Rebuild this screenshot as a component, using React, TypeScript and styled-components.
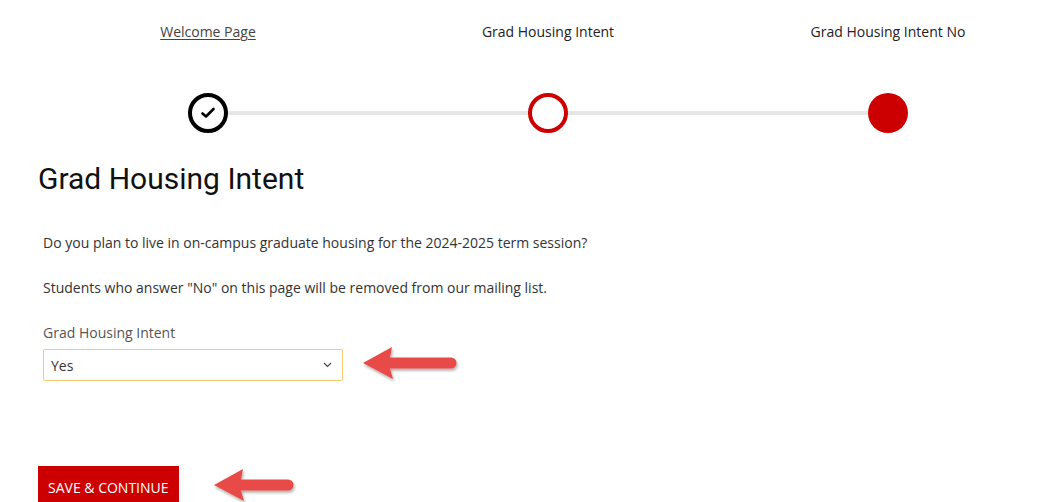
import React from "react";
import styled, { createGlobalStyle } from "styled-components";

const GlobalStyle = createGlobalStyle`
  html, body {
    margin: 0;
    padding: 0;
    background: #fff;
    overflow: hidden;
  }
  body {
    font-family: "Open Sans", "Liberation Sans", sans-serif;
    color: #333;
  }
`;

const Page = styled.div`
  width: 1038px;
  height: 502px;
  overflow: hidden;
`;

const Stepper = styled.div`
  position: relative;
  display: grid;
  grid-template-columns: repeat(3, 340px);
  margin-left: 38px;
  padding-top: 22px;
`;

const Track = styled.div`
  position: absolute;
  left: 170px;
  right: 170px;
  top: 111px;
  height: 4px;
  background: #e6e6e6;
`;

const Step = styled.div`
  display: flex;
  flex-direction: column;
  align-items: center;
  z-index: 1;
`;

const StepLabel = styled.span<{ $link?: boolean }>`
  font-size: 14px;
  line-height: 19px;
  color: ${(p) => (p.$link ? "#444" : "#222")};
  text-decoration: ${(p) => (p.$link ? "underline" : "none")};
  text-underline-offset: 2px;
`;

const Dot = styled.div<{ $kind: "done" | "current" | "next" }>`
  box-sizing: border-box;
  margin-top: 52px;
  width: 40px;
  height: 40px;
  border-radius: 50%;
  display: flex;
  align-items: center;
  justify-content: center;
  background: ${(p) => (p.$kind === "next" ? "#cc0000" : "#fff")};
  border: ${(p) =>
    p.$kind === "done"
      ? "4px solid #000"
      : p.$kind === "current"
      ? "4px solid #cc0000"
      : "none"};
`;

const Content = styled.div`
  padding-left: 38px;
`;

const Title = styled.h1`
  margin: 28px 0 0;
  font-family: Roboto, "Liberation Sans", sans-serif;
  font-weight: 400;
  font-size: 30px;
  line-height: 36px;
  color: #111;
`;

const Body = styled.div`
  padding-left: 5px;
  margin-top: 36px;
`;

const Para = styled.p`
  margin: 0 0 26px;
  font-size: 14px;
  line-height: 19px;
  color: #333;
`;

const FieldLabel = styled.label`
  display: block;
  margin-top: 15px;
  font-size: 14px;
  line-height: 19px;
  color: #555;
`;

const FieldRow = styled.div`
  display: flex;
  align-items: center;
  gap: 18px;
  margin-top: 4px;
`;

const SelectBox = styled.div`
  box-sizing: border-box;
  width: 300px;
  height: 32px;
  border: 1px solid #f6ca72;
  border-radius: 2px;
  display: flex;
  align-items: center;
  justify-content: space-between;
  padding: 0 10px 0 7px;
  font-size: 14px;
  color: #333;
`;

const ButtonRow = styled.div`
  display: flex;
  align-items: center;
  gap: 33px;
  margin-top: 82px;
`;

const SaveButton = styled.button`
  border: none;
  background: #cc0000;
  color: #fff;
  font-family: "Open Sans", "Liberation Sans", sans-serif;
  font-size: 14px;
  height: 42px;
  padding: 0 10px;
  text-transform: uppercase;
`;

function Check() {
  return (
    <svg width="14" height="12" viewBox="0 0 14 12">
      <path d="M1.5 6.5 L5 9.5 L12.5 2" fill="none" stroke="#000" strokeWidth="2.6" strokeLinecap="round" strokeLinejoin="round" />
    </svg>
  );
}

function Chevron() {
  return (
    <svg width="9" height="6" viewBox="0 0 9 6">
      <path d="M1 1 L4.5 4.5 L8 1" fill="none" stroke="#444" strokeWidth="1.2" />
    </svg>
  );
}

function Arrow({ width }: { width: number }) {
  const h = 38;
  const end = width - 10;
  return (
    <svg width={width} height={h} viewBox={`0 0 ${width} ${h}`}>
      <defs>
        <filter id={`sh${width}`} x="-10%" y="-20%" width="130%" height="150%">
          <feDropShadow dx="1" dy="2" stdDeviation="1.5" floodColor="#000" floodOpacity="0.35" />
        </filter>
      </defs>
      <path
        d={`M2 17 L31 1 L29 11.5 L${end} 11.5 A5.5 5.5 0 0 1 ${end} 22.5 L29 22.5 L32 33 Z`}
        fill="#e84c47"
        filter={`url(#sh${width})`}
      />
    </svg>
  );
}

export default function App() {
  return (
    <Page>
      <GlobalStyle />
      <Stepper>
        <Track />
        <Step>
          <StepLabel $link>Welcome Page</StepLabel>
          <Dot $kind="done">
            <Check />
          </Dot>
        </Step>
        <Step>
          <StepLabel>Grad Housing Intent</StepLabel>
          <Dot $kind="current" />
        </Step>
        <Step>
          <StepLabel>Grad Housing Intent No</StepLabel>
          <Dot $kind="next" />
        </Step>
      </Stepper>
      <Content>
        <Title>Grad Housing Intent</Title>
        <Body>
          <Para>Do you plan to live in on-campus graduate housing for the 2024-2025 term session?</Para>
          <Para>Students who answer "No" on this page will be removed from our mailing list.</Para>
          <FieldLabel>Grad Housing Intent</FieldLabel>
          <FieldRow>
            <SelectBox>
              <span>Yes</span>
              <Chevron />
            </SelectBox>
            <Arrow width={100} />
          </FieldRow>
        </Body>
        <ButtonRow>
          <SaveButton>Save &amp; Continue</SaveButton>
          <Arrow width={86} />
        </ButtonRow>
      </Content>
    </Page>
  );
}
